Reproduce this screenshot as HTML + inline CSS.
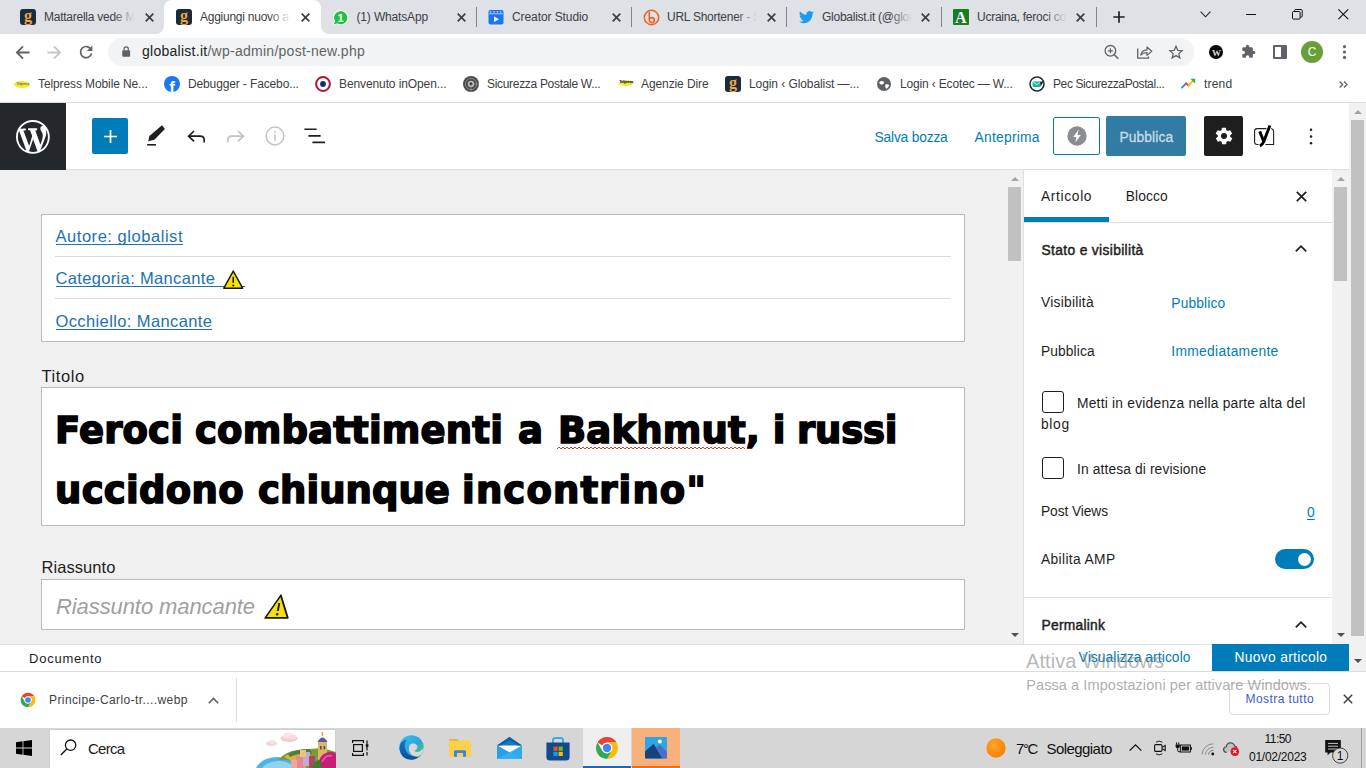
<!DOCTYPE html>
<html lang="it">
<head>
<meta charset="utf-8">
<title>Aggiungi nuovo articolo</title>
<style>
*{box-sizing:border-box;margin:0;padding:0}
html,body{width:1366px;height:768px;overflow:hidden;background:#fff}
body{position:relative;font-family:"Liberation Sans",sans-serif;color:#1e1e1e}
.a{position:absolute}
.t{position:absolute;white-space:nowrap;line-height:1}
svg{position:absolute;overflow:visible}
#tabstrip{left:0;top:0;width:1366px;height:34px;background:#dee1e6}
.tabt{overflow:hidden}
.tabt:after{content:"";position:absolute;right:0;top:0;width:24px;height:100%;background:linear-gradient(90deg,rgba(222,225,230,0),#dee1e6 90%)}
.tabt.act:after{background:linear-gradient(90deg,rgba(255,255,255,0),#fff 90%)}
.sep{width:1px;height:20px;top:7px;background:#80868b}
.fav{width:16px;height:16px;top:9px;border-radius:3px}
#toolbar{left:0;top:34px;width:1366px;height:34px;background:#fff}
#omni{left:108px;top:4px;width:1086px;height:28px;border-radius:14px;background:#f1f3f4}
#bm{left:0;top:68px;width:1366px;height:34px;background:#fff}
#page{left:0;top:102px;width:1366px;height:570px;background:#fff;overflow:hidden}
#dl{left:0;top:671px;width:1366px;height:57px;background:#fff}
#taskbar{left:0;top:728px;width:1366px;height:40px;background:#d6d6d6}
</style>
</head>
<body>
<div id="tabstrip" class="a">
<div class="a" style="left:164px;top:0;width:157px;height:34px;background:#fff;border-radius:8px 8px 0 0"></div>
<svg style="left:156px;top:26px" width="8" height="8" viewBox="0 0 8 8"><path d="M0 8H8V0A8 8 0 0 1 0 8Z" fill="#fff"/></svg>
<svg style="left:321px;top:26px" width="8" height="8" viewBox="0 0 8 8"><path d="M8 8H0V0A8 8 0 0 0 8 8Z" fill="#fff"/></svg>
<div class="a fav" style="left:20px;top:9px;background:#1b2b3c;"><span class="t" style="left:4px;top:-2.5px;font:bold 16px 'Liberation Serif',serif;color:#f0a63c">g</span></div>
<div class="t tabt" style="left:44px;top:11px;font-family:'Liberation Sans',sans-serif;font-size:12px;color:#3c4043;width:93px;letter-spacing:-0.25px;height:14px;">Mattarella vede Mattarella</div>
<svg style="left:144.5px;top:12.5px" width="9" height="9" viewBox="0 0 9 9"><path d="M0.7 0.7L8.3 8.3M8.3 0.7L0.7 8.3" stroke="#3c4043" stroke-width="1.7" fill="none"/></svg>
<div class="a fav" style="left:176px;top:9px;background:#1b2b3c;"><span class="t" style="left:4px;top:-2.5px;font:bold 16px 'Liberation Serif',serif;color:#f0a63c">g</span></div>
<div class="t tabt act" style="left:200px;top:11px;font-family:'Liberation Sans',sans-serif;font-size:12px;color:#3c4043;width:93px;letter-spacing:-0.25px;height:14px;">Aggiungi nuovo articolo</div>
<svg style="left:300.5px;top:12.5px" width="9" height="9" viewBox="0 0 9 9"><path d="M0.7 0.7L8.3 8.3M8.3 0.7L0.7 8.3" stroke="#3c4043" stroke-width="1.7" fill="none"/></svg>
<svg style="left:332px;top:9px" width="17" height="17" viewBox="0 0 17 17"><path d="M0.8 16.4L2.1 12.2A7.4 7.4 0 1 1 4.9 15Z" fill="#fff"/><path d="M1.9 15.4L3 12A6.6 6.6 0 1 1 5.2 14.3Z" fill="#1fc13f"/></svg><div class="t" style="left:337.6px;top:11.5px;font:bold 11px 'Liberation Sans',sans-serif;color:#fff">1</div>
<div class="t" style="left:356.5px;top:11px;font-family:'Liberation Sans',sans-serif;font-size:12px;color:#3c4043;letter-spacing:-0.155px;">(1) WhatsApp</div>
<svg style="left:456.5px;top:12.5px" width="9" height="9" viewBox="0 0 9 9"><path d="M0.7 0.7L8.3 8.3M8.3 0.7L0.7 8.3" stroke="#3c4043" stroke-width="1.7" fill="none"/></svg>
<div class="a sep" style="left:476px"></div>
<svg style="left:488px;top:9px" width="16" height="16" viewBox="0 0 16 16"><rect x="0.5" y="1" width="15" height="14.5" rx="2" fill="#1877f2"/><path d="M1 4.8H15" stroke="#dee1e6" stroke-width="0.8"/><path d="M2.3 1.7l1.5 1.2-1.5 1.2zM5.6 1.7l1.5 1.2-1.5 1.2zM8.9 1.7l1.5 1.2-1.5 1.2zM12.2 1.7l1.5 1.2-1.5 1.2z" fill="#d6e5fc"/><path d="M6 7.4L11 10.2 6 13Z" fill="#fff"/></svg>
<div class="t" style="left:512px;top:11px;font-family:'Liberation Sans',sans-serif;font-size:12px;color:#3c4043;letter-spacing:-0.084px;">Creator Studio</div>
<svg style="left:611.5px;top:12.5px" width="9" height="9" viewBox="0 0 9 9"><path d="M0.7 0.7L8.3 8.3M8.3 0.7L0.7 8.3" stroke="#3c4043" stroke-width="1.7" fill="none"/></svg>
<div class="a sep" style="left:631px"></div>
<svg style="left:643px;top:9px" width="17" height="17" viewBox="0 0 17 17"><circle cx="8.5" cy="8.5" r="7.2" fill="none" stroke="#ee6123" stroke-width="1.5"/><path d="M6.3 3.6V11.3A2.5 2.5 0 1 0 8.8 8.6Q7.2 8.6 6.3 10" fill="none" stroke="#ee6123" stroke-width="1.6" stroke-linecap="round"/></svg>
<div class="t tabt" style="left:667px;top:11px;font-family:'Liberation Sans',sans-serif;font-size:12px;color:#3c4043;width:93px;letter-spacing:-0.25px;height:14px;">URL Shortener - Short</div>
<svg style="left:766.5px;top:12.5px" width="9" height="9" viewBox="0 0 9 9"><path d="M0.7 0.7L8.3 8.3M8.3 0.7L0.7 8.3" stroke="#3c4043" stroke-width="1.7" fill="none"/></svg>
<div class="a sep" style="left:786px"></div>
<svg style="left:798.5px;top:10.5px" width="15" height="12.5" viewBox="0 0 24 20" preserveAspectRatio="none"><path d="M24 2.4a9.8 9.8 0 0 1-2.8.8A4.9 4.9 0 0 0 23.3.5a9.9 9.9 0 0 1-3.1 1.2 4.9 4.9 0 0 0-8.4 4.5A14 14 0 0 1 1.7.9a4.9 4.9 0 0 0 1.5 6.6A4.9 4.9 0 0 1 1 6.9v.1a4.9 4.9 0 0 0 3.9 4.8 4.9 4.9 0 0 1-2.2.1 4.9 4.9 0 0 0 4.6 3.4A9.9 9.9 0 0 1 0 17.3 14 14 0 0 0 7.5 19.5c9.1 0 14-7.5 14-14v-.6A10 10 0 0 0 24 2.4Z" fill="#1d9bf0"/></svg>
<div class="t tabt" style="left:822px;top:11px;font-family:'Liberation Sans',sans-serif;font-size:12px;color:#3c4043;width:92px;letter-spacing:-0.25px;height:14px;">Globalist.it (@globalist</div>
<svg style="left:920.5px;top:12.5px" width="9" height="9" viewBox="0 0 9 9"><path d="M0.7 0.7L8.3 8.3M8.3 0.7L0.7 8.3" stroke="#3c4043" stroke-width="1.7" fill="none"/></svg>
<div class="a sep" style="left:941px"></div>
<div class="a" style="left:953px;top:9px;width:16px;height:16px;background:#15801f;border-radius:1px"><span class="t" style="left:2px;top:0px;font:bold 16px 'Liberation Serif',serif;color:#fff">A</span></div>
<div class="t tabt" style="left:977px;top:11px;font-family:'Liberation Sans',sans-serif;font-size:12px;color:#3c4043;width:92px;letter-spacing:-0.25px;height:14px;">Ucraina, feroci combattimenti</div>
<svg style="left:1075.5px;top:12.5px" width="9" height="9" viewBox="0 0 9 9"><path d="M0.7 0.7L8.3 8.3M8.3 0.7L0.7 8.3" stroke="#3c4043" stroke-width="1.7" fill="none"/></svg>
<div class="a sep" style="left:1096px"></div>
<svg style="left:1113px;top:11px" width="12" height="12" viewBox="0 0 12 12"><path d="M6 0.3V11.7M0.3 6H11.7" stroke="#202124" stroke-width="1.7" fill="none"/></svg>
<svg style="left:1199.5px;top:11px" width="11" height="7" viewBox="0 0 11 7"><path d="M0.6 0.6L5.5 5.8L10.4 0.6" stroke="#202124" stroke-width="1.1" fill="none"/></svg>
<div class="a" style="left:1246px;top:14px;width:10px;height:1px;background:#111"></div>
<svg style="left:1292px;top:9px" width="11" height="11" viewBox="0 0 11 11"><rect x="0.5" y="2.5" width="7.6" height="7.6" rx="1" fill="none" stroke="#111" stroke-width="1"/><path d="M2.6 2.4V1.5Q2.6 0.5 3.6 0.5H9.2Q10.2 0.5 10.2 1.5V7.1Q10.2 8.1 9.2 8.1H8.3" fill="none" stroke="#111" stroke-width="1"/></svg>
<svg style="left:1338px;top:9px" width="11" height="11" viewBox="0 0 11 11"><path d="M0.4 0.4L10.2 10.2M10.2 0.4L0.4 10.2" stroke="#111" stroke-width="1.1" fill="none"/></svg>
</div>
<div id="toolbar" class="a">
<svg style="left:14.5px;top:10.5px" width="15" height="15" viewBox="0 0 15 15"><path d="M14.5 7.5H2M8 1.4L1.9 7.5L8 13.6" stroke="#5f6368" stroke-width="1.8" fill="none"/></svg>
<svg style="left:46.5px;top:10.5px" width="15" height="15" viewBox="0 0 15 15"><path d="M0.5 7.5H13M7 1.4L13.1 7.5L7 13.6" stroke="#c4c7ca" stroke-width="1.8" fill="none"/></svg>
<svg style="left:79px;top:11px" width="14" height="14" viewBox="0 0 14 14"><path d="M12 4.2A5.6 5.6 0 1 0 12.6 8.6" stroke="#5f6368" stroke-width="1.7" fill="none"/><path d="M13.4 0.4V6H7.8Z" fill="#5f6368"/></svg>
<div id="omni" class="a">
<svg style="left:14px;top:8px" width="8.4" height="11" viewBox="0 0 9 12" preserveAspectRatio="none"><rect x="0.3" y="4.6" width="8.4" height="7" rx="1" fill="#5f6368"/><path d="M2.2 5V3.2A2.3 2.3 0 0 1 6.8 3.2V5" stroke="#5f6368" stroke-width="1.3" fill="none"/></svg>
<div class="t" style="left:34px;top:6px;font-family:'Liberation Sans',sans-serif;font-size:14px;color:#5f6368;letter-spacing:0.264px;"><span style="color:#202124">globalist.it</span>/wp-admin/post-new.php</div>
<svg style="left:995px;top:6px" width="17" height="17" viewBox="0 0 17 17"><circle cx="7.4" cy="6.8" r="5.3" fill="none" stroke="#5f6368" stroke-width="1.3"/><path d="M11.3 10.7L15.3 14.7" stroke="#5f6368" stroke-width="1.6"/><path d="M7.4 4.3V9.3M4.9 6.8H9.9" stroke="#5f6368" stroke-width="1.2"/></svg>
<svg style="left:1029px;top:7px" width="16" height="14" viewBox="0 0 16 14"><path d="M0.7 3.6V13.2H11.5V11.6" stroke="#5f6368" stroke-width="1.3" fill="none"/><path d="M3.8 10.2Q4.8 5.2 10 4.9V2L14.8 6.3L10 10.4V7.6Q6.2 7.4 3.8 10.2Z" stroke="#5f6368" stroke-width="1.2" fill="none" stroke-linejoin="round"/></svg>
<svg style="left:1061px;top:6.5px" width="14" height="14" viewBox="0 0 24 24"><path d="M12 2.2l3 6.9 7.5.7-5.7 5 1.7 7.3L12 18.2l-6.5 3.9 1.7-7.3-5.7-5 7.5-.7z" fill="none" stroke="#5f6368" stroke-width="2.2" stroke-linejoin="miter"/></svg>
</div>
<div class="a" style="left:1209px;top:10.5px;width:14px;height:14px;border-radius:7px;background:#050505"><span class="t" style="left:3px;top:3px;font:bold 9px 'Liberation Serif',serif;color:#ddd">W</span></div>
<svg style="left:1240.5px;top:10px" width="15" height="15" viewBox="0 0 24 24"><path d="M20.5 11H19V7a2 2 0 0 0-2-2h-4V3.5a2.5 2.5 0 0 0-5 0V5H4a2 2 0 0 0-2 2v3.8h1.5a2.7 2.7 0 0 1 0 5.4H2V20a2 2 0 0 0 2 2h3.8v-1.5a2.7 2.7 0 0 1 5.4 0V22H17a2 2 0 0 0 2-2v-4h1.5a2.5 2.5 0 0 0 0-5z" fill="#5f6368"/></svg>
<div class="a" style="left:1273px;top:11px;width:14px;height:14px;border:2px solid #5f6368;border-right-width:6px;border-radius:1px"></div>
<div class="a" style="left:1301px;top:7px;width:22px;height:22px;border-radius:11px;background:#689f38"><span class="t" style="left:6.7px;top:5px;font-size:12px;color:#fff">C</span></div>
<svg style="left:1341.8px;top:10px" width="5" height="16" viewBox="0 0 5 16"><circle cx="2.5" cy="2.6" r="1.6" fill="#5f6368"/><circle cx="2.5" cy="8" r="1.6" fill="#5f6368"/><circle cx="2.5" cy="13.4" r="1.6" fill="#5f6368"/></svg>
</div>
<div id="bm" class="a">
<div class="a" style="left:14px;top:12.5px;width:16px;height:7px;border-radius:50%;background:#f4ea2a"></div>
<div class="t" style="left:16.5px;top:14.2px;font:bold 3.2px 'Liberation Sans',sans-serif;color:#666">Telpress</div>
<div class="t" style="left:38px;top:10px;font-family:'Liberation Sans',sans-serif;font-size:12px;color:#3c4043;letter-spacing:-0.107px;">Telpress Mobile Ne...</div>
<div class="a" style="left:164px;top:8px;width:16px;height:16px;border-radius:8px;background:#1877f2;overflow:hidden"><span class="t" style="left:5.2px;top:2px;font:bold 17px 'Liberation Sans',sans-serif;color:#fff">f</span></div>
<div class="t" style="left:188px;top:10px;font-family:'Liberation Sans',sans-serif;font-size:12px;color:#3c4043;letter-spacing:-0.130px;">Debugger - Facebo...</div>
<svg style="left:315px;top:8px" width="16" height="16" viewBox="0 0 16 16"><circle cx="8" cy="8" r="6.9" fill="#fff" stroke="#b4122c" stroke-width="2"/><circle cx="8" cy="8" r="2.9" fill="#0b2d84"/></svg>
<div class="t" style="left:339px;top:10px;font-family:'Liberation Sans',sans-serif;font-size:12px;color:#3c4043;letter-spacing:-0.106px;">Benvenuto inOpen...</div>
<svg style="left:463px;top:8px" width="16" height="16" viewBox="0 0 16 16"><circle cx="8" cy="8" r="8" fill="#4a4a4a"/><circle cx="8" cy="8" r="5.6" fill="none" stroke="#8a8a8a" stroke-width="1"/><circle cx="8" cy="8" r="3.2" fill="#bdbdbd"/><circle cx="8" cy="8" r="1.4" fill="#111"/><path d="M8 8H16M8 8V16" stroke="#9a9a9a" stroke-width="0.7"/></svg>
<div class="t" style="left:487px;top:10px;font-family:'Liberation Sans',sans-serif;font-size:12px;color:#3c4043;letter-spacing:-0.311px;">Sicurezza Postale W...</div>
<div class="a" style="left:619px;top:12px;width:14px;height:6px;border-radius:50%;background:#f0ee1a"></div>
<div class="t" style="left:619.5px;top:11.6px;font:bold 3.4px 'Liberation Sans',sans-serif;color:#1a237e;-webkit-text-stroke:0.2px #1a237e">Telpress</div>
<div class="t" style="left:641px;top:10px;font-family:'Liberation Sans',sans-serif;font-size:12px;color:#3c4043;letter-spacing:-0.100px;">Agenzie Dire</div>
<div class="a fav" style="left:725px;top:8px;background:#1b2b3c;"><span class="t" style="left:4px;top:-2.5px;font:bold 16px 'Liberation Serif',serif;color:#f0a63c">g</span></div>
<div class="t" style="left:749px;top:10px;font-family:'Liberation Sans',sans-serif;font-size:12px;color:#3c4043;letter-spacing:-0.080px;">Login ‹ Globalist —...</div>
<svg style="left:877px;top:9px" width="14" height="14" viewBox="0 0 14 14"><circle cx="7" cy="7" r="7" fill="#5f6368"/><path d="M2.3 5.2Q4 3.4 6.2 4.3Q7.8 5.4 6.6 6.8Q5.3 7.8 3.6 7.2Q2.2 6.6 2.3 5.2ZM8.3 7.4Q10.6 6.6 12.2 8.2Q11.6 10.8 9.4 12Q7.6 10.4 8.3 7.4Z" fill="#fff"/></svg>
<div class="t" style="left:900px;top:10px;font-family:'Liberation Sans',sans-serif;font-size:12px;color:#3c4043;letter-spacing:-0.159px;">Login ‹ Ecotec — W...</div>
<svg style="left:1029px;top:8px" width="16" height="16" viewBox="0 0 16 16"><circle cx="8" cy="8" r="7" fill="#fff" stroke="#1f2933" stroke-width="1.5"/><path d="M3.4 5.6H12.4L11.6 11H3.8Z" fill="#19b5a5"/><path d="M3.4 5.6L8 8.6L12.4 5.6" stroke="#e6fffb" stroke-width="0.8" fill="none"/><path d="M10.8 6.2L15.2 4.6L12 10Z" fill="#1f2933"/></svg>
<div class="t" style="left:1053px;top:10px;font-family:'Liberation Sans',sans-serif;font-size:12px;color:#3c4043;letter-spacing:-0.389px;">Pec SicurezzaPostal...</div>
<svg style="left:1181px;top:10px" width="15" height="11" viewBox="0 0 15 11"><path d="M1 9.6L5 5.4" stroke="#4285f4" stroke-width="2" stroke-linecap="round"/><path d="M5 5.4L7.6 7.6" stroke="#ea4335" stroke-width="2" stroke-linecap="round"/><path d="M7.6 7.6L11.6 3.2" stroke="#fbbc04" stroke-width="2" stroke-linecap="round"/><path d="M9.4 0.8H14.2V5.6Z" fill="#34a853"/></svg>
<div class="t" style="left:1204px;top:10px;font-family:'Liberation Sans',sans-serif;font-size:12px;color:#3c4043;letter-spacing:0.188px;">trend</div>
<svg style="left:1338.5px;top:12.5px" width="9" height="7" viewBox="0 0 9 7"><path d="M0.6 0.5L3.6 3.5L0.6 6.5M5 0.5L8 3.5L5 6.5" stroke="#5f6368" stroke-width="1.3" fill="none"/></svg>
</div>
<div id="page" class="a">
<div class="a" style="left:0;top:0;width:1366px;height:1px;background:#dcdde0"></div>
<div class="a" style="left:0;top:68px;width:1023px;height:474px;background:#f0f0f0"></div>
<div class="a" style="left:0;top:67px;width:1349px;height:1px;background:#e0e0e0"></div>
<div class="a" style="left:0;top:1px;width:66px;height:67px;background:#23282d"></div>
<svg style="left:16px;top:17.7px" width="33.8" height="33.8" viewBox="0 0 20 20"><path fill="#fff" d="M20 10c0-5.51-4.49-10-10-10C4.48 0 0 4.49 0 10c0 5.52 4.48 10 10 10 5.51 0 10-4.48 10-10zM7.78 15.37L4.37 6.22c.55-.02 1.17-.08 1.17-.08.5-.06.44-1.13-.06-1.11 0 0-1.45.11-2.37.11-.18 0-.37 0-.58-.01C4.12 2.69 6.87 1.11 10 1.11c2.33 0 4.45.87 6.05 2.34-.68-.11-1.65.39-1.65 1.58 0 .74.45 1.36.9 2.1.35.61.55 1.36.55 2.46 0 1.49-1.4 5-1.4 5l-3.03-8.37c.54-.02.82-.17.82-.17.5-.05.44-1.25-.06-1.22 0 0-1.44.12-2.38.12-.87 0-2.33-.12-2.33-.12-.5-.03-.56 1.2-.06 1.22l.92.08 1.26 3.41zM17.41 10c.24-.64.74-1.87.43-4.25.7 1.29 1.05 2.71 1.05 4.25 0 3.29-1.73 6.24-4.4 7.78.97-2.59 1.94-5.2 2.92-7.78zM6.1 18.09C3.12 16.65 1.11 13.53 1.11 10c0-1.3.23-2.48.72-3.59C3.25 10.3 4.67 14.2 6.1 18.09zm4.03-6.63l2.58 6.98c-.86.29-1.76.45-2.71.45-.79 0-1.57-.11-2.29-.33.81-2.38 1.62-4.74 2.42-7.1z"/></svg>
<div class="a" style="left:92px;top:16px;width:36px;height:36px;border-radius:2px;background:#007cba"></div>
<svg style="left:103.5px;top:27.5px" width="13" height="13" viewBox="0 0 13 13"><path d="M6.5 0V13M0 6.5H13" stroke="#fff" stroke-width="1.7"/></svg>
<svg style="left:146px;top:23px" width="19" height="21" viewBox="0 0 19 21"><path d="M16 0.3L18.9 3.9L8.4 14.7L2.2 16.3L3.4 10.9Z" fill="#1e1e1e"/><path d="M1.2 19.8H10" stroke="#1e1e1e" stroke-width="1.6"/></svg>
<svg style="left:187px;top:27.5px" width="19" height="13" viewBox="0 0 19 13"><path d="M7 1L1.6 6.2L7 11.4M1.8 6.2H13.2Q17.2 6.2 17.2 10.2V12.4" stroke="#1e1e1e" stroke-width="1.7" fill="none"/></svg>
<svg style="left:226px;top:27.5px" width="19" height="13" viewBox="0 0 19 13"><path d="M12 1L17.4 6.2L12 11.4M17.2 6.2H5.8Q1.8 6.2 1.8 10.2V12.4" stroke="#c3c3c3" stroke-width="1.7" fill="none"/></svg>
<svg style="left:265px;top:24px" width="20" height="20" viewBox="0 0 20 20"><circle cx="10" cy="10" r="8.9" fill="none" stroke="#c3c3c3" stroke-width="1.5"/><path d="M10 8.8V14.8" stroke="#c3c3c3" stroke-width="1.6"/><circle cx="10" cy="6" r="1" fill="#c3c3c3"/></svg>
<svg style="left:304px;top:26px" width="22" height="16" viewBox="0 0 22 16"><path d="M0.4 1.3H12.6M4.4 7.9H16.6M8.4 14.4H21" stroke="#1e1e1e" stroke-width="1.6"/></svg>
<div class="t" style="left:874.5px;top:29px;font-family:'Liberation Sans',sans-serif;font-size:13.8px;color:#007cba;letter-spacing:-0.188px;">Salva bozza</div>
<div class="t" style="left:974.5px;top:29px;font-family:'Liberation Sans',sans-serif;font-size:13.8px;color:#007cba;letter-spacing:0.268px;">Anteprima</div>
<div class="a" style="left:1053px;top:15px;width:47px;height:38px;border:1px solid #007cba;border-radius:2px;background:#fff"></div>
<svg style="left:1066.5px;top:24px" width="20" height="20" viewBox="0 0 20 20"><circle cx="10" cy="10" r="9.7" fill="#8a8d91"/><path d="M11.6 3.6L6.2 11H9.4L8.4 16.4L13.8 9H10.6Z" fill="#fff"/></svg>
<div class="a" style="left:1106px;top:14px;width:80px;height:40px;border-radius:2px;background:#327ba4"></div>
<div class="t" style="left:1119.5px;top:29px;font-family:'Liberation Sans',sans-serif;font-size:13.8px;color:#cbdbe6;letter-spacing:0.095px;-webkit-text-stroke:0.3px #cbdbe6;">Pubblica</div>
<div class="a" style="left:1204px;top:14px;width:39px;height:40px;border-radius:2px;background:#1e1e1e"></div>
<svg style="left:1213.5px;top:24px" width="20" height="20" viewBox="0 0 24 24"><path d="M19.4 13a7.6 7.6 0 0 0 0-2l2.1-1.6a.5.5 0 0 0 .1-.7l-2-3.400000000000001a.5.5 0 0 0-.6-.2l-2.5 1a7.300000000000001 7.300000000000001 0 0 0-1.7-1l-.4-2.600000000000001a.5.5 0 0 0-.5-.4h-4a.5.5 0 0 0-.5.4l-.4 2.600000000000001a7.300000000000001 7.300000000000001 0 0 0-1.7 1l-2.5-1a.5.5 0 0 0-.6.2l-2 3.400000000000001a.5.5 0 0 0 .1.7L4.600000000000001 11a7.6 7.6 0 0 0 0 2l-2.1 1.6a.5.5 0 0 0-.1.7l2 3.400000000000001a.5.5 0 0 0 .6.2l2.5-1a7.300000000000001 7.300000000000001 0 0 0 1.7 1l.4 2.600000000000001a.5.5 0 0 0 .5.4h4a.5.5 0 0 0 .5-.4l.4-2.600000000000001a7.300000000000001 7.300000000000001 0 0 0 1.7-1l2.5 1a.5.5 0 0 0 .6-.2l2-3.400000000000001a.5.5 0 0 0-.1-.7zM12 15.600000000000001A3.6 3.6 0 1 1 12 8.4a3.6 3.6 0 0 1 0 7.2z" fill="#fff"/></svg>
<svg style="left:1246px;top:16px" width="40" height="36" viewBox="0 0 40 36"><path d="M20.4 10.6H11.1Q8.6 10.6 8.6 13.1V24Q8.6 26.5 11.1 26.5H12.6M19.4 26.5H27.6V13.4Q27.6 11.2 25.2 10.5" fill="none" stroke="#1e1e1e" stroke-width="1.1"/><path d="M13.7 13.4L18.2 24.6" stroke="#000" stroke-width="2.9" fill="none"/><path d="M23.9 7.4L17.9 23.2Q16.6 26.8 13.9 27.9" stroke="#000" stroke-width="2.9" fill="none"/></svg>
<svg style="left:1309px;top:26px" width="4" height="17" viewBox="0 0 4 17"><circle cx="2" cy="1.7" r="1.25" fill="#1e1e1e"/><circle cx="2" cy="8.5" r="1.25" fill="#1e1e1e"/><circle cx="2" cy="15.3" r="1.25" fill="#1e1e1e"/></svg>
<div class="a" style="left:41px;top:112px;width:924px;height:128px;background:#fff;border:1px solid #bababf"></div>
<div class="t" style="left:55.5px;top:126px;font-family:'Liberation Sans',sans-serif;font-size:16.5px;color:#2271b1;letter-spacing:0.540px;">Autore: globalist</div><div class="a" style="left:55.5px;top:142px;width:127.5px;height:1px;background:#2271b1"></div>
<div class="a" style="left:55px;top:154px;width:896px;height:1px;background:#dcdcdc"></div>
<div class="t" style="left:55.5px;top:168px;font-family:'Liberation Sans',sans-serif;font-size:16.5px;color:#2271b1;letter-spacing:0.343px;">Categoria: Mancante</div><div class="a" style="left:55.5px;top:184px;width:189.0px;height:1px;background:#2271b1"></div>
<svg style="left:222.5px;top:168.2px" width="20.5" height="19" viewBox="0 0 20 18" preserveAspectRatio="none"><path d="M10 1L19.2 17.2H0.8Z" fill="#f7df0b" stroke="#151515" stroke-width="1.4" stroke-linejoin="round"/><path d="M10 6.5V12.2" stroke="#151515" stroke-width="1.5"/><circle cx="10" cy="14.6" r="0.95" fill="#151515"/></svg>
<div class="a" style="left:55px;top:196px;width:896px;height:1px;background:#dcdcdc"></div>
<div class="t" style="left:55.5px;top:211px;font-family:'Liberation Sans',sans-serif;font-size:16.5px;color:#2271b1;letter-spacing:0.389px;">Occhiello: Mancante</div><div class="a" style="left:55.5px;top:227px;width:156.9px;height:1px;background:#2271b1"></div>
<div class="t" style="left:41.5px;top:266px;font-family:'Liberation Sans',sans-serif;font-size:16.5px;color:#1e1e1e;letter-spacing:0.592px;">Titolo</div>
<div class="a" style="left:41px;top:285px;width:924px;height:139px;background:#fff;border:1px solid #bababf"></div>
<div class="t" style="left:55px;top:310px;font-family:'DejaVu Sans',sans-serif;font-size:37px;font-weight:bold;color:#000;letter-spacing:0.141px;-webkit-text-stroke:1.6px #000;">Feroci</div>
<div class="t" style="left:195px;top:310px;font-family:'DejaVu Sans',sans-serif;font-size:37px;font-weight:bold;color:#000;letter-spacing:0.171px;-webkit-text-stroke:1.6px #000;">combattimenti</div>
<div class="t" style="left:518.0px;top:310px;font-family:'DejaVu Sans',sans-serif;font-size:37px;font-weight:bold;color:#000;letter-spacing:-3.469px;-webkit-text-stroke:1.6px #000;">a</div>
<div class="t" style="left:558px;top:310px;font-family:'DejaVu Sans',sans-serif;font-size:37px;font-weight:bold;color:#000;letter-spacing:0.154px;-webkit-text-stroke:1.6px #000;">Bakhmut,</div>
<div class="t" style="left:772.7px;top:310px;font-family:'DejaVu Sans',sans-serif;font-size:37px;font-weight:bold;color:#000;letter-spacing:-2.388px;-webkit-text-stroke:1.6px #000;">i</div>
<div class="t" style="left:797px;top:310px;font-family:'DejaVu Sans',sans-serif;font-size:37px;font-weight:bold;color:#000;letter-spacing:-0.206px;-webkit-text-stroke:1.6px #000;">russi</div>
<div class="t" style="left:55px;top:370px;font-family:'DejaVu Sans',sans-serif;font-size:37px;font-weight:bold;color:#000;letter-spacing:0.292px;-webkit-text-stroke:1.6px #000;">uccidono</div>
<div class="t" style="left:258.1px;top:370px;font-family:'DejaVu Sans',sans-serif;font-size:37px;font-weight:bold;color:#000;letter-spacing:0.042px;-webkit-text-stroke:1.6px #000;">chiunque</div>
<div class="t" style="left:462.1px;top:370px;font-family:'DejaVu Sans',sans-serif;font-size:37px;font-weight:bold;color:#000;letter-spacing:1.120px;-webkit-text-stroke:1.6px #000;">incontrino"</div>
<svg style="left:557px;top:344px" width="189" height="4" viewBox="0 0 189 4"><path d="M0 3L2 1L4 3L6 1L8 3L10 1L12 3L14 1L16 3L18 1L20 3L22 1L24 3L26 1L28 3L30 1L32 3L34 1L36 3L38 1L40 3L42 1L44 3L46 1L48 3L50 1L52 3L54 1L56 3L58 1L60 3L62 1L64 3L66 1L68 3L70 1L72 3L74 1L76 3L78 1L80 3L82 1L84 3L86 1L88 3L90 1L92 3L94 1L96 3L98 1L100 3L102 1L104 3L106 1L108 3L110 1L112 3L114 1L116 3L118 1L120 3L122 1L124 3L126 1L128 3L130 1L132 3L134 1L136 3L138 1L140 3L142 1L144 3L146 1L148 3L150 1L152 3L154 1L156 3L158 1L160 3L162 1L164 3L166 1L168 3L170 1L172 3L174 1L176 3L178 1L180 3L182 1L184 3L186 1L188 3" stroke="#e53935" stroke-width="1" fill="none"/></svg>
<div class="t" style="left:41.5px;top:457px;font-family:'Liberation Sans',sans-serif;font-size:16.5px;color:#1e1e1e;letter-spacing:0.069px;">Riassunto</div>
<div class="a" style="left:41px;top:477px;width:924px;height:51px;background:#fff;border:1px solid #bababf"></div>
<div class="t" style="left:56px;top:494px;font-family:'Liberation Sans',sans-serif;font-size:22px;font-style:italic;color:#9f9f9f;letter-spacing:-0.087px;">Riassunto mancante</div>
<svg style="left:263.5px;top:492px;transform:skewX(-11deg);transform-origin:50% 100%" width="24.5" height="25" viewBox="0 0 20 18" preserveAspectRatio="none"><path d="M10 1L19.2 17.2H0.8Z" fill="#f7df0b" stroke="#151515" stroke-width="1.4" stroke-linejoin="round"/><path d="M10 6.5V12.2" stroke="#151515" stroke-width="1.5"/><circle cx="10" cy="14.6" r="0.95" fill="#151515"/></svg>
<div class="a" style="left:1006px;top:68px;width:17px;height:474px;background:#f1f1f1"></div><div class="a" style="left:1008px;top:85px;width:13px;height:74px;background:#c1c1c1"></div><svg style="left:1010.5px;top:75px" width="8" height="4" viewBox="0 0 8 4"><path d="M0 4L4 0L8 4Z" fill="#a3a3a3"/></svg><svg style="left:1010.5px;top:531px" width="8" height="4" viewBox="0 0 8 4"><path d="M0 0L4 4L8 0Z" fill="#505050"/></svg>
<div class="a" style="left:1023px;top:68px;width:1px;height:474px;background:#e0e0e0"></div>
<div class="t" style="left:1041px;top:88px;font-family:'Liberation Sans',sans-serif;font-size:13.8px;color:#1e1e1e;letter-spacing:0.648px;">Articolo</div>
<div class="t" style="left:1125.8px;top:88px;font-family:'Liberation Sans',sans-serif;font-size:13.8px;color:#1e1e1e;letter-spacing:0.096px;">Blocco</div>
<div class="a" style="left:1024px;top:120px;width:308px;height:1px;background:#e0e0e0"></div>
<div class="a" style="left:1024px;top:115px;width:85px;height:5px;background:#007cba"></div>
<svg style="left:1295.5px;top:89px" width="11" height="11" viewBox="0 0 11 11"><path d="M0.8 0.8L10.2 10.2M10.2 0.8L0.8 10.2" stroke="#1e1e1e" stroke-width="1.7" fill="none"/></svg>
<div class="t" style="left:1041.5px;top:142px;font-family:'Liberation Sans',sans-serif;font-size:13.8px;color:#1e1e1e;letter-spacing:0.347px;-webkit-text-stroke:0.45px #1e1e1e;">Stato e visibilità</div>
<svg style="left:1295px;top:143.3px" width="12" height="7" viewBox="0 0 12 7"><path d="M0.8 6.3L6 1.1L11.2 6.3" stroke="#1e1e1e" stroke-width="1.7" fill="none"/></svg>
<div class="t" style="left:1041px;top:194px;font-family:'Liberation Sans',sans-serif;font-size:13.8px;color:#1e1e1e;letter-spacing:0.244px;">Visibilità</div>
<div class="t" style="left:1171.3px;top:195px;font-family:'Liberation Sans',sans-serif;font-size:13.8px;color:#007cba;letter-spacing:0.133px;">Pubblico</div>
<div class="t" style="left:1041px;top:243px;font-family:'Liberation Sans',sans-serif;font-size:13.8px;color:#1e1e1e;letter-spacing:0.095px;">Pubblica</div>
<div class="t" style="left:1171.3px;top:243px;font-family:'Liberation Sans',sans-serif;font-size:13.8px;color:#007cba;letter-spacing:0.324px;">Immediatamente</div>
<div class="a" style="left:1042px;top:289px;width:22px;height:22px;border:1px solid #1e1e1e;border-radius:3px;background:#fff"></div>
<div class="t" style="left:1077px;top:295px;font-family:'Liberation Sans',sans-serif;font-size:13.8px;color:#1e1e1e;letter-spacing:0.223px;">Metti in evidenza nella parte alta del</div>
<div class="t" style="left:1041px;top:316px;font-family:'Liberation Sans',sans-serif;font-size:13.8px;color:#1e1e1e;letter-spacing:0.677px;">blog</div>
<div class="a" style="left:1042px;top:355px;width:22px;height:22px;border:1px solid #1e1e1e;border-radius:3px;background:#fff"></div>
<div class="t" style="left:1077px;top:361px;font-family:'Liberation Sans',sans-serif;font-size:13.8px;color:#1e1e1e;letter-spacing:0.121px;">In attesa di revisione</div>
<div class="t" style="left:1041px;top:403px;font-family:'Liberation Sans',sans-serif;font-size:13.8px;color:#1e1e1e;letter-spacing:-0.100px;">Post Views</div>
<div class="t" style="left:1307px;top:404px;font-family:'Liberation Sans',sans-serif;font-size:13.8px;color:#007cba;text-decoration:underline;text-underline-offset:2px;">0</div>
<div class="t" style="left:1041px;top:451px;font-family:'Liberation Sans',sans-serif;font-size:13.8px;color:#1e1e1e;letter-spacing:0.358px;">Abilita AMP</div>
<div class="a" style="left:1275px;top:447px;width:39px;height:20px;border-radius:10px;background:#007cba"></div>
<div class="a" style="left:1298px;top:450.5px;width:13px;height:13px;border-radius:7px;background:#fff"></div>
<div class="a" style="left:1024px;top:495px;width:308px;height:1px;background:#e0e0e0"></div>
<div class="t" style="left:1041.5px;top:517px;font-family:'Liberation Sans',sans-serif;font-size:13.8px;color:#1e1e1e;letter-spacing:0.262px;-webkit-text-stroke:0.45px #1e1e1e;">Permalink</div>
<svg style="left:1295px;top:518.5px" width="12" height="7" viewBox="0 0 12 7"><path d="M0.8 6.3L6 1.1L11.2 6.3" stroke="#1e1e1e" stroke-width="1.7" fill="none"/></svg>
<div class="a" style="left:1332px;top:68px;width:17px;height:474px;background:#f1f1f1"></div><div class="a" style="left:1334px;top:85px;width:13px;height:94px;background:#c1c1c1"></div><svg style="left:1336.5px;top:75px" width="8" height="4" viewBox="0 0 8 4"><path d="M0 4L4 0L8 4Z" fill="#a3a3a3"/></svg><svg style="left:1336.5px;top:531px" width="8" height="4" viewBox="0 0 8 4"><path d="M0 0L4 4L8 0Z" fill="#505050"/></svg>
<div class="a" style="left:0;top:542px;width:1349px;height:27px;background:#fff;border-top:1px solid #e0e0e0"></div>
<div class="t" style="left:29px;top:550px;font-family:'Liberation Sans',sans-serif;font-size:13px;color:#1e1e1e;letter-spacing:0.757px;">Documento</div>
<div class="t" style="left:1078.6px;top:549px;font-family:'Liberation Sans',sans-serif;font-size:13.8px;color:#007cba;letter-spacing:0.095px;">Visualizza articolo</div>
<div class="a" style="left:1212px;top:542px;width:137px;height:27px;background:#007cba"></div>
<div class="t" style="left:1234.4px;top:549px;font-family:'Liberation Sans',sans-serif;font-size:13.8px;color:#fff;letter-spacing:0.343px;">Nuovo articolo</div>
<div class="a" style="left:1349px;top:1px;width:17px;height:569px;background:#f1f1f1"></div>
<div class="a" style="left:1351px;top:18px;width:13px;height:516px;background:#c1c1c1"></div>
<svg style="left:1353.5px;top:8px" width="8" height="4" viewBox="0 0 8 4"><path d="M0 4L4 0L8 4Z" fill="#a3a3a3"/></svg>
<svg style="left:1353.5px;top:557px" width="8" height="4" viewBox="0 0 8 4"><path d="M0 0L4 4L8 0Z" fill="#505050"/></svg>
</div>
<div id="dl" class="a">
<div class="a" style="left:0;top:0;width:1366px;height:1px;background:#dadce0"></div>
<svg style="left:20px;top:21px" width="16" height="16" viewBox="0 0 48 48"><circle cx="24" cy="24" r="22" fill="#fff"/><path d="M24 2A22 22 0 0 1 43.05 13H24A11 11 0 0 0 14.47 18.5L4.95 13A22 22 0 0 1 24 2Z" fill="#ea4335"/><path d="M43.05 13A22 22 0 0 1 24 46L33.53 29.5A11 11 0 0 0 33.53 18.5L24 13Z" fill="#fbbc04"/><path d="M24 46A22 22 0 0 1 4.95 13L14.47 29.5A11 11 0 0 0 24 35L33.53 29.5Z" fill="#34a853"/><circle cx="24" cy="24" r="10.5" fill="#fff"/><circle cx="24" cy="24" r="8.4" fill="#4285f4"/></svg>
<div class="t" style="left:49px;top:23px;font-family:'Liberation Sans',sans-serif;font-size:12px;color:#3c4043;letter-spacing:0.403px;">Principe-Carlo-tr....webp</div>
<svg style="left:207.5px;top:25.5px" width="11" height="7" viewBox="0 0 11 7"><path d="M0.8 6.2L5.5 1.5L10.2 6.2" stroke="#5f6368" stroke-width="1.6" fill="none"/></svg>
<div class="a" style="left:236px;top:7px;width:1px;height:44px;background:#dadce0"></div>
<div class="a" style="left:1229px;top:12px;width:101px;height:31.5px;border:1px solid #dadce0;border-radius:4px;background:#fff"></div>
<div class="t" style="left:1245.5px;top:22px;font-family:'Liberation Sans',sans-serif;font-size:12px;color:#3b5bdb;letter-spacing:0.428px;">Mostra tutto</div>
<div class="t" style="left:1026.3px;top:7px;font-family:'Liberation Sans',sans-serif;font-size:14.5px;color:rgba(120,120,120,0.62);letter-spacing:0.082px;">Passa a Impostazioni per attivare Windows.</div>
<svg style="left:1343px;top:23px" width="10" height="10" viewBox="0 0 10 10"><path d="M0.8 0.8L9.2 9.2M9.2 0.8L0.8 9.2" stroke="#3c4043" stroke-width="1.5" fill="none"/></svg>
</div>
<div class="t" style="left:1026px;top:651px;font-family:'Liberation Sans',sans-serif;font-size:20px;color:rgba(120,120,120,0.55);letter-spacing:0.092px;">Attiva Windows</div>
<div id="taskbar" class="a">
<svg style="left:16px;top:12px" width="16" height="16" viewBox="0 0 16 16"><path d="M0 2.2L6.6 1.3V7.6H0ZM7.4 1.2L16 0V7.6H7.4ZM0 8.4H6.6V14.7L0 13.8ZM7.4 8.4H16V16L7.4 14.8Z" fill="#000"/></svg>
<div class="a" style="left:49px;top:1px;width:287px;height:39px;background:#fff;border:1px solid #cfcfcf;border-bottom:0"></div>
<svg style="left:60px;top:11px" width="17" height="17" viewBox="0 0 17 17"><circle cx="10.6" cy="6.2" r="5.2" fill="none" stroke="#111" stroke-width="1.3"/><path d="M6.8 9.9L0.8 15.9" stroke="#111" stroke-width="1.4"/></svg>
<div class="t" style="left:88px;top:13px;font-family:'Liberation Sans',sans-serif;font-size:15px;color:#1b1b1b;letter-spacing:-0.743px;">Cerca</div>
<svg style="left:250px;top:1px" width="86" height="39" viewBox="250 729 86 39"><ellipse cx="271.5" cy="743.5" rx="5.5" ry="2.4" fill="#f6d3d6"/><ellipse cx="272" cy="741.6" rx="3" ry="2.2" fill="#f9e3e4"/><ellipse cx="289" cy="738.5" rx="8.5" ry="3.4" fill="#f4cdd1"/><ellipse cx="288" cy="735.6" rx="4.6" ry="3" fill="#fae6e7"/><ellipse cx="293" cy="737" rx="3.4" ry="2.4" fill="#f7dcdf"/><path d="M256 768Q262 757 278 757Q290 758 300 768Z" fill="#4fb3e8"/><path d="M262 768Q268 761 280 761Q290 762 296 768Z" fill="#8fd3f4"/><path d="M278 760Q286 751 298 750L322 748L336 752V768H300Q292 758 278 760Z" fill="#7c9a3a"/><path d="M284 757Q292 752 300 752L306 768H298Q292 760 284 757Z" fill="#d8b24c"/><path d="M288 754Q296 749 310 749L312 754Q298 753 290 757Z" fill="#4e7f3a"/><rect x="296" y="756" width="8" height="12" fill="#e58a8a"/><rect x="303" y="752" width="7" height="14" fill="#c9a7dd"/><rect x="309" y="756" width="6" height="12" fill="#a94a5a"/><rect x="300" y="750" width="6" height="7" fill="#e9c77a"/><rect x="291" y="760" width="6" height="8" fill="#f0a6a0"/><rect x="318" y="742" width="9" height="20" fill="#d9b86a"/><path d="M317.5 742Q322.5 733 327.5 742Z" fill="#5a5aa0"/><rect x="321.8" y="732" width="1.4" height="4" fill="#c9a24a"/><rect x="320" y="746" width="1.6" height="3.4" fill="#6b4a2a"/><rect x="323.6" y="746" width="1.6" height="3.4" fill="#6b4a2a"/><path d="M318 768Q318 756 326 753Q332 750 336 754V768Z" fill="#c41f79"/><path d="M322 762Q326 754 332 756" stroke="#e85aa7" stroke-width="1.6" fill="none"/><path d="M312 768Q314 760 320 760L322 768Z" fill="#3f7a34"/></svg>
<svg style="left:351.5px;top:11.5px" width="17" height="16" viewBox="0 0 17 16"><path d="M0.6 3V0.7H11.4V3M0.6 13V15.3H11.4V13" stroke="#111" stroke-width="1.2" fill="none"/><rect x="1.6" y="4.6" width="8.8" height="6.8" fill="none" stroke="#111" stroke-width="1.2"/><path d="M15 0.5V15.5" stroke="#111" stroke-width="1.2" stroke-dasharray="3.4 1.6 5 1.6 3.4"/><rect x="13.8" y="4.2" width="2.6" height="2.6" fill="#111"/></svg>
<svg style="left:398.5px;top:7.3px" width="25" height="25" viewBox="0 0 25 25"><defs><linearGradient id="eg1" x1="0" y1="0" x2="1" y2="1"><stop offset="0" stop-color="#35c1f1"/><stop offset="0.55" stop-color="#2da5d8"/><stop offset="1" stop-color="#5ed45a"/></linearGradient><linearGradient id="eg2" x1="0" y1="0" x2="0" y2="1"><stop offset="0" stop-color="#1b74c5"/><stop offset="1" stop-color="#0d4f9e"/></linearGradient></defs><circle cx="12.5" cy="12.5" r="12.2" fill="url(#eg1)"/><path d="M0.4 13.5Q0.6 6 8 4.4Q5 8 6 13Q7.4 20.6 15.6 21.4Q19.4 21.4 22.4 18.6Q19 24.6 12.5 24.7Q1.6 24.4 0.4 13.5Z" fill="url(#eg2)"/><path d="M10 12.4Q10.4 8.6 14 8.4Q18.8 8.6 18.4 12.6Q18 15.2 15.2 15.4Q17 17.6 20.4 16.6Q24.6 14.4 24.7 11.6L24.7 13Q24 19 19.5 21.6Q13 22 10.6 17Q9.6 14.6 10 12.4Z" fill="#d8d8d8"/></svg>
<svg style="left:448.5px;top:11px" width="22" height="18" viewBox="0 0 22 18"><path d="M0 1.2Q0 0.2 1 0.2H8.4L10 2H0Z" fill="#e9a521"/><rect x="0" y="1.4" width="22" height="16.4" rx="0.8" fill="#fbd04c"/><path d="M5 17.8V12.2Q5 11.2 6 11.2H16Q17 11.2 17 12.2V17.8H14V14H8V17.8Z" fill="#3a86d9"/></svg>
<svg style="left:496.5px;top:8.6px" width="25" height="22" viewBox="0 0 25 22"><path d="M0 8.4L12.5 0L25 8.4V22H0Z" fill="#1779c9"/><path d="M0 8.6H25L12.5 16.8Z" fill="#fff"/><path d="M0 8.6V22H25Z" fill="#2b9fe8"/><path d="M25 8.6V22H0Z" fill="#35b3f2" opacity="0.85"/><path d="M0 8.4L12.5 0L25 8.4H21L12.5 3.2L4 8.4Z" fill="#0f5ea8"/></svg>
<svg style="left:545.5px;top:8.5px" width="24" height="24" viewBox="0 0 24 24"><path d="M7 6V3.4Q7 1 9.4 1H14.6Q17 1 17 3.4V6" stroke="#3fa9ee" stroke-width="2" fill="none"/><path d="M0.4 5.4H23.6V20Q23.6 23.6 20 23.6H4Q0.4 23.6 0.4 20Z" fill="#134a8e"/><rect x="7.4" y="9.6" width="4.2" height="4.2" fill="#f25022"/><rect x="12.6" y="9.6" width="4.2" height="4.2" fill="#7fba00"/><rect x="7.4" y="14.8" width="4.2" height="4.2" fill="#00a4ef"/><rect x="12.6" y="14.8" width="4.2" height="4.2" fill="#ffb900"/></svg>
<div class="a" style="left:583px;top:0;width:48px;height:40px;background:#efefef"></div><div class="a" style="left:583px;top:38px;width:48px;height:2px;background:#0a6dc9"></div>
<svg style="left:594.8px;top:7.6px" width="24" height="24" viewBox="0 0 48 48"><path d="M24 2A22 22 0 0 1 43.05 13H24A11 11 0 0 0 14.47 18.5L4.95 13A22 22 0 0 1 24 2Z" fill="#ea4335"/><path d="M43.05 13A22 22 0 0 1 24 46L33.53 29.5A11 11 0 0 0 33.53 18.5L24 13Z" fill="#fbbc04"/><path d="M24 46A22 22 0 0 1 4.95 13L14.47 29.5A11 11 0 0 0 24 35L33.53 29.5Z" fill="#34a853"/><circle cx="24" cy="24" r="10.5" fill="#fff"/><circle cx="24" cy="24" r="8.4" fill="#4285f4"/></svg>
<div class="a" style="left:632px;top:0;width:48px;height:40px;background:#f7b27b"></div><div class="a" style="left:632px;top:38px;width:48px;height:2px;background:#fa6c0a"></div>
<svg style="left:645px;top:9.2px" width="22" height="21.5" viewBox="0 0 22 21.5"><rect width="22" height="21.5" rx="1" fill="#29a7ea"/><path d="M0 14.4L8.6 6.8L17.4 21.5H1Q0 21.5 0 20.5Z" fill="#17427e"/><path d="M11 10.6L14.6 7.6L22 15V20.5Q22 21.5 21 21.5H17.4Z" fill="#4a6fc9"/><circle cx="14.8" cy="4.6" r="2" fill="#fff"/></svg>
<svg style="left:986px;top:10px" width="20" height="20" viewBox="0 0 20 20"><defs><radialGradient id="sun" cx="0.4" cy="0.35" r="0.75"><stop offset="0" stop-color="#ffa726"/><stop offset="1" stop-color="#f57c00"/></radialGradient></defs><circle cx="10" cy="10" r="9.7" fill="url(#sun)"/></svg>
<div class="t" style="left:1016px;top:13px;font-family:'Liberation Sans',sans-serif;font-size:15px;color:#111;letter-spacing:-1.396px;">7°C</div>
<div class="t" style="left:1046.5px;top:13px;font-family:'Liberation Sans',sans-serif;font-size:15px;color:#111;letter-spacing:-0.561px;">Soleggiato</div>
<svg style="left:1129px;top:16.3px" width="13" height="7" viewBox="0 0 13 7"><path d="M0.6 6.6L6.5 0.9L12.4 6.6" stroke="#111" stroke-width="1.3" fill="none"/></svg>
<svg style="left:1153.5px;top:12px" width="12" height="16" viewBox="0 0 12 16"><path d="M2 2.2Q5 0 8.4 2.2M2 13.8Q5 16 8.4 13.8" stroke="#222" stroke-width="1" fill="none"/><rect x="0.6" y="4.6" width="7.4" height="6.8" rx="1.2" fill="none" stroke="#111" stroke-width="1.1"/><path d="M8.4 7.2L11.2 5.4V10.6L8.4 8.8" fill="none" stroke="#111" stroke-width="1.1"/></svg>
<svg style="left:1175px;top:14px" width="17" height="11" viewBox="0 0 17 11"><path d="M1.6 0.4V2.6M3.8 0.4V2.6" stroke="#111" stroke-width="1"/><path d="M0.6 2.6H4.8V4.6Q4.8 6.4 2.7 6.4Q0.6 6.4 0.6 4.6Z" fill="#111"/><path d="M2.7 6.4V8.4Q2.7 9.8 4 9.8H5" stroke="#111" stroke-width="1" fill="none"/><rect x="5.4" y="3" width="10" height="7" fill="none" stroke="#111" stroke-width="1"/><rect x="6.8" y="4.4" width="7.2" height="4.2" fill="#111"/><rect x="15.6" y="5" width="1.2" height="3" fill="#111"/></svg>
<svg style="left:1201px;top:14.5px" width="14" height="13" viewBox="0 0 14 13"><path d="M1 11.6A11.4 11.4 0 0 1 12.4 0.8" stroke="#8a8a8a" stroke-width="1" fill="none"/><path d="M4.4 11.6A8 8 0 0 1 12.4 4.2" stroke="#8a8a8a" stroke-width="1" fill="none"/><path d="M7.6 11.6A4.8 4.8 0 0 1 12.4 7.4" stroke="#777" stroke-width="1" fill="none"/><circle cx="11.8" cy="11" r="1.4" fill="#111"/></svg>
<svg style="left:1223px;top:14px" width="17" height="14" viewBox="0 0 17 14"><path d="M3.6 10.4Q0.6 10.2 0.6 7.4Q0.8 5 3.2 4.8Q4 1 7.4 0.8Q10.6 0.8 11.6 4Q13.6 4 14 6" fill="#c2c2c2" stroke="#444" stroke-width="1.1"/><circle cx="11.8" cy="9.6" r="4.3" fill="#e81123"/><path d="M10.2 8L13.4 11.2M13.4 8L10.2 11.2" stroke="#fff" stroke-width="1.1"/></svg>
<div class="t" style="left:1264.5px;top:5px;font-family:'Liberation Sans',sans-serif;font-size:12px;color:#111;letter-spacing:-0.528px;">11:50</div>
<div class="t" style="left:1249px;top:23px;font-family:'Liberation Sans',sans-serif;font-size:12px;color:#111;letter-spacing:-0.256px;">01/02/2023</div>
<svg style="left:1325px;top:12px" width="24" height="24" viewBox="0 0 24 24"><path d="M0.2 0H15.8V12.4H5.6L2.6 15.2V12.4H0.2Z" fill="#111"/><path d="M3 3.4H13M3 6.2H13M3 9H13" stroke="#d8d8d8" stroke-width="0.9"/><circle cx="15.2" cy="15.6" r="7.6" fill="#d8d8d8" stroke="#333" stroke-width="0.9"/></svg>
<div class="t" style="left:1336.8px;top:22px;font-family:'Liberation Sans',sans-serif;font-size:12px;color:#111;">1</div>
<div class="a" style="left:1361px;top:0;width:1px;height:40px;background:#9e9e9e"></div>
</div>
</body>
</html>
